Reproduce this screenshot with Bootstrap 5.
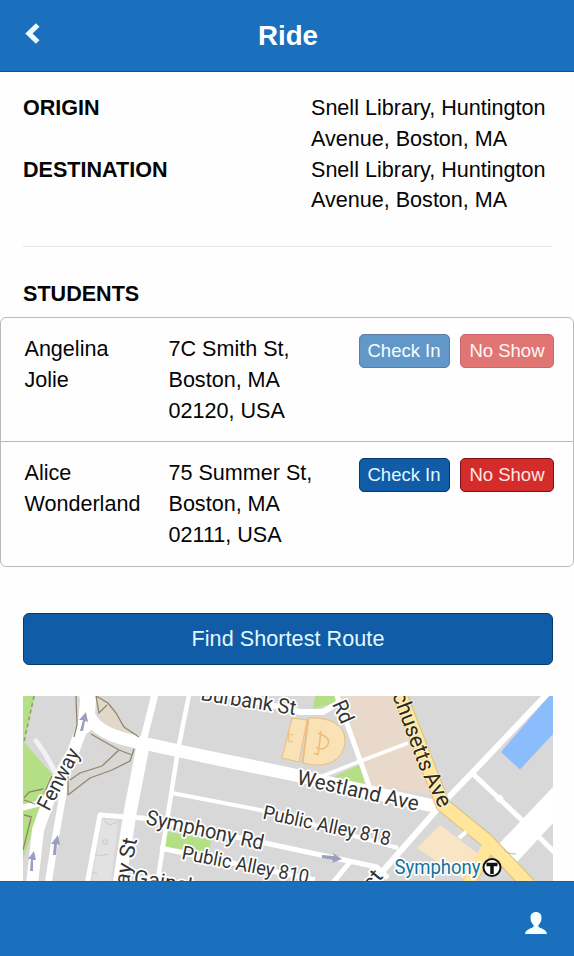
<!DOCTYPE html>
<html lang="en">
<head>
<meta charset="utf-8">
<meta name="viewport" content="width=device-width, initial-scale=1">
<title>Ride</title>
<link href="https://cdn.jsdelivr.net/npm/bootstrap@5.3.0/dist/css/bootstrap.min.css" rel="stylesheet">
<style>
body{font-family:"Liberation Sans",Arial,sans-serif;font-size:21.57px;line-height:30.8px;color:#050505;background:#fefefe;height:956px;overflow:hidden}
.topbar{height:72px;background:#1a70bd;border-bottom:1px solid #1c4a80;padding:0 24px 3px}
.topbar h1{font-size:27.7px;line-height:32px;padding-top:3px}
.trip{padding:21px 5px 0 23px}
.trip .label{width:288px}
.trip .place{width:246px}
.section-title{font-size:21.57px;line-height:30.8px;font-weight:700;margin:0;padding:32px 0 0 23px}
.rule{height:1px;background:#e6e6e6;margin:30px 22px 0 23px}
.students{border:1px solid #bbb;border-radius:6px;margin-top:7px}
.student{height:123px;padding:16px 19px 0 23.500px}
.student + .student{height:125px;border-top:1px solid #bbb}
.who{width:144px}
.where{width:190px}
.btn-act{--bs-btn-padding-x:0;--bs-btn-padding-y:0;--bs-btn-border-radius:5px;--bs-btn-font-size:18.5px;--bs-btn-line-height:30px;height:34px;--bs-btn-disabled-opacity:.65}
.in{width:91px}
.no{width:94px}
.blue{--bs-btn-color:#e2f8ff;--bs-btn-bg:#115ca6;--bs-btn-border-color:#0a3969;--bs-btn-disabled-color:#f4fcff;--bs-btn-disabled-bg:#0f62ad;--bs-btn-disabled-border-color:#0a3969}
.red{--bs-btn-color:#ffe6e2;--bs-btn-bg:#d32c2b;--bs-btn-border-color:#7c1219;--bs-btn-disabled-color:#fff4f2;--bs-btn-disabled-bg:#d32c2b;--bs-btn-disabled-border-color:#b01822}
.route{height:52px;margin:46px 21px 0 23px;--bs-btn-font-size:21.57px;--bs-btn-border-radius:6px;--bs-btn-padding-y:0;letter-spacing:.06px}
.map{display:block;width:530px;height:185px;margin:31px 0 0 23px}
.botbar{height:75px;background:#1a70bd;border-top:1px solid #1d62a4;padding:7px 26px 0 0}
.map text{font-family:Roboto,sans-serif;font-size:21px;fill:#333;stroke:#fff;stroke-width:3.5px;stroke-linejoin:round;paint-order:stroke}
.map .alley{font-size:19.500px}
.map .avenue{fill:#30291c;stroke:#fff3cc;stroke-width:2px;font-size:22px}
.map .station{fill:#15719a;font-size:19.500px}
</style>
<script src="https://cdn.jsdelivr.net/npm/bootstrap@5.3.0/dist/js/bootstrap.bundle.min.js"></script>
</head>
<body class="d-flex flex-column">
<header class="topbar d-flex align-items-center flex-shrink-0">
  <svg width="18" height="24" viewBox="0 0 18 24"><path d="M13.700 3 5 11.500l8.700 8.500" fill="none" stroke="#ecfaff" stroke-width="5.200"/></svg>
  <h1 class="flex-grow-1 text-center fw-bold text-white mb-0 pe-3">Ride</h1>
</header>
<main class="flex-grow-1">
  <section class="trip">
    <div class="d-flex"><div class="label fw-bold">ORIGIN</div><div class="place">Snell Library, Huntington Avenue, Boston, MA</div></div>
    <div class="d-flex"><div class="label fw-bold">DESTINATION</div><div class="place">Snell Library, Huntington Avenue, Boston, MA</div></div>
  </section>
  <div class="rule"></div>
  <h2 class="section-title">STUDENTS</h2>
  <section class="students">
    <div class="student d-flex align-items-start">
      <div class="who">Angelina<br>Jolie</div>
      <div class="where">7C Smith St,<br>Boston, MA<br>02120, USA</div>
      <button class="btn btn-act blue in" disabled>Check In</button>
      <button class="btn btn-act red no ms-auto" disabled>No Show</button>
    </div>
    <div class="student d-flex align-items-start">
      <div class="who">Alice<br>Wonderland</div>
      <div class="where">75 Summer St,<br>Boston, MA<br>02111, USA</div>
      <button class="btn btn-act blue in">Check In</button>
      <button class="btn btn-act red no ms-auto">No Show</button>
    </div>
  </section>
  <div class="d-grid"><button class="btn blue route">Find Shortest Route</button></div>
  <svg class="map" viewBox="23 696 530 185">
    <rect x="23" y="696" width="530" height="185" fill="#d8d8d8"/>
    <!-- parks -->
    <g fill="#b5df84">
      <path d="M23 696H35L24 742 52 774 33 830 23 860Z"/>
      <path d="M315 696H335V703L313 709Z"/><path d="M333 777 361 764 365 787Z"/>
      <path d="M164 831 212 840 208 852 162 847Z"/>
    </g>
    <path d="M34 696 24 742" stroke="#8d9a72" stroke-width="1.500" stroke-dasharray="4 3"/>
    <!-- brown and beige areas -->
    <path d="M338 696H398L432 795 372 786Z" fill="#e8d9ca"/>
    <path d="M440 825 481 856 467 881 417 848Z" fill="#f9e5c5"/>
    <path d="M549 696H553V734L520 769.500 501 752Z" fill="#8bbcfb"/>
    <path d="M95 696Q98 722 112 729Q125 738 138 741L126 729 116 713 96 696Z" fill="#e0d9ca"/>
    <path d="M91 735 132 754 68 794 72 776 110 756Z" fill="#d9d7d3"/>
    <g fill="#fae2b7" stroke="#eebc78">
      <path d="M292 718 307 720 299 762 282 758Z"/>
      <path d="M309 718C328 717 345 724 345 740C345 758 329 770 303 763Z"/>
      <path d="M308 719 302 763M293 735 289 734 288 741 293 742" fill="none"/>
      <path d="M318 733Q334 739 326 747Q321 751 316 747M321 731 318 755M314 753 318 755" fill="none" stroke-width="1.600"/>
    </g>
    <!-- white streets -->
    <g fill="none" stroke="#fff" stroke-linejoin="round">
      <path d="M87 690 84 722 73 752 53 788 38 830 32 885" stroke-width="12"/>
      <path d="M85 690 89 716Q98 735 138 742L205 756.500 290 774 438 807" stroke-width="13"/>
      <path d="M92 690 90 725 78 735" stroke-width="9"/>
      <path d="M70 760 65 782 62 800 55 840 48 885" stroke-width="7"/>
      <path d="M22 808 44 802" stroke-width="6"/>
      <path d="M36 741Q45 752 56 774" stroke-width="5" stroke="#f2f2f2" stroke-linecap="round"/>
      <path d="M156 690 142 746" stroke-width="7"/>
      <path d="M143 746 130 813 119 885" stroke-width="13"/>
      <path d="M190 690 178 750 157 885" stroke-width="4.500"/>
      <path d="M172 793 260 810 398 848" stroke-width="4"/>
      <path d="M87 885 100 815 142 818 265 843 377 867 388 878" stroke-width="5"/>
      <path d="M160 848 315 880M350 862 331 885" stroke-width="5"/>
      <path d="M215 692 300 712 323 712 340 702" stroke-width="6"/>
      <path d="M335 690 370 788" stroke-width="5"/>
      <path d="M320 777 358 762 408 743" stroke-width="3.500"/>
      <path d="M548 693 472 773 440 806 375 880" stroke-width="6"/>
      <path d="M472 773 525 823 555 853M502 796 497 801" stroke-width="5"/>
    </g>
    <path d="M553 787 498 845 517 862 553 823Z" fill="#fff"/>
    <!-- Massachusetts Ave -->
    <g fill="none">
      <path d="M398 690 443 805 486 840 529 885" stroke="#ddbd7b" stroke-width="15"/>
      <path d="M488 848 468 885" stroke="#ddbd7b" stroke-width="13"/>
      <path d="M488 846 468 885" stroke="#ffe69a" stroke-width="12"/>
      <path d="M398 690 443 805 486 840 529 885" stroke="#ffe69a" stroke-width="13"/>
      <path d="M459 838 466 832" stroke="#fff" stroke-width="4"/>
      <path d="M504 850Q510 855 516 854" stroke="#b8b8b8"/>
    </g>
    <!-- footpaths -->
    <g fill="none" stroke="#91866a" stroke-width="1.300">
      <path d="M76 696 77 725 74 737M96 696 99 713 107 705M96 696 108 703 116 713 124 727 139 737"/>
      <path d="M91 734 119 750 132 755M119 750 102 766 80 773 70 780M134 749 130 761 112 770 90 778 68 795"/>
      <path d="M68 776 68 795M52 776 44 794M24 798 29 792 43 789M24 800 38 805M24 815 32 817M31 818 23 850"/>
    </g>
    <g fill="none" stroke="#c9c9c9"><path d="M102 820H118L111 881H92Z" fill="#e2e2e2" stroke="none"/><path d="M95 854 99 856 108 854M104 821 110 825 117 822M103 840H107V844H103ZM92 873H97"/></g>
    <!-- one-way arrows -->
    <g fill="#9a9fc0">
      <path d="M80 731 83 720 79 720 86 712 88 722 85 721 83 731Z"/>
      <path d="M30 871 31 859 28 859 34 851 36 860 33 860 33 871Z"/>
      <path d="M53 855 54 844 51 844 58 835 60 845 57 844 56 855Z"/>
      <path d="M322 855 334 856 333 853 342 859 332 863 333 860 322 858Z"/>
    </g>
    <text transform="translate(200 700) rotate(9)" textLength="96" lengthAdjust="spacingAndGlyphs">Burbank St</text>
    <text transform="translate(332 704) rotate(66)" textLength="23" lengthAdjust="spacingAndGlyphs">Rd</text>
    <text transform="translate(49 812) rotate(-62)" textLength="67" lengthAdjust="spacingAndGlyphs">Fenway</text>
    <text transform="translate(296 784) rotate(12.500)" textLength="124" lengthAdjust="spacingAndGlyphs">Westland Ave</text>
    <text class="alley" transform="translate(262 818.500) rotate(12)" textLength="130" lengthAdjust="spacingAndGlyphs">Public Alley 818</text>
    <text transform="translate(145 824) rotate(12.500)" textLength="120" lengthAdjust="spacingAndGlyphs">Symphony Rd</text>
    <text class="alley" transform="translate(181 859) rotate(11)" textLength="129" lengthAdjust="spacingAndGlyphs">Public Alley 810</text>
    <text transform="translate(125 902) rotate(-79)" textLength="64" lengthAdjust="spacingAndGlyphs">way St</text>
    <text transform="translate(133 884) rotate(9)" textLength="132" lengthAdjust="spacingAndGlyphs">Gainsborough</text>
    <text transform="translate(371 892) rotate(-50)" textLength="20" lengthAdjust="spacingAndGlyphs">ct</text>
    <text class="avenue" transform="translate(392 695) rotate(69.500)" textLength="83" lengthAdjust="spacingAndGlyphs">chusetts</text>
    <text class="avenue" transform="translate(423 776) rotate(63)" textLength="37" lengthAdjust="spacingAndGlyphs">Ave</text>
    <text class="station" x="394.500" y="874" textLength="86" lengthAdjust="spacingAndGlyphs">Symphony</text>
    <circle cx="492" cy="867.500" r="8.500" fill="#fff" stroke="#111" stroke-width="2"/>
    <path d="M486.500 864.500H497.500M492 864V874" stroke="#111" stroke-width="3.500"/>
  </svg>
</main>
<footer class="botbar d-flex align-items-center justify-content-end flex-shrink-0">
  <svg width="24" height="24" viewBox="0 0 24 24"><path d="M12 1C8.500 1 6.500 3.300 6.500 6.500C6.500 10 7.600 12.200 9.500 14V16C5.500 17.800 1.500 19 1 23H23C22.500 19 18.500 17.800 14.500 16V14C16.400 12.200 17.500 10 17.500 6.500C17.500 3.300 15.500 1 12 1Z" fill="#f5fdff"/></svg>
</footer>
</body>
</html>
